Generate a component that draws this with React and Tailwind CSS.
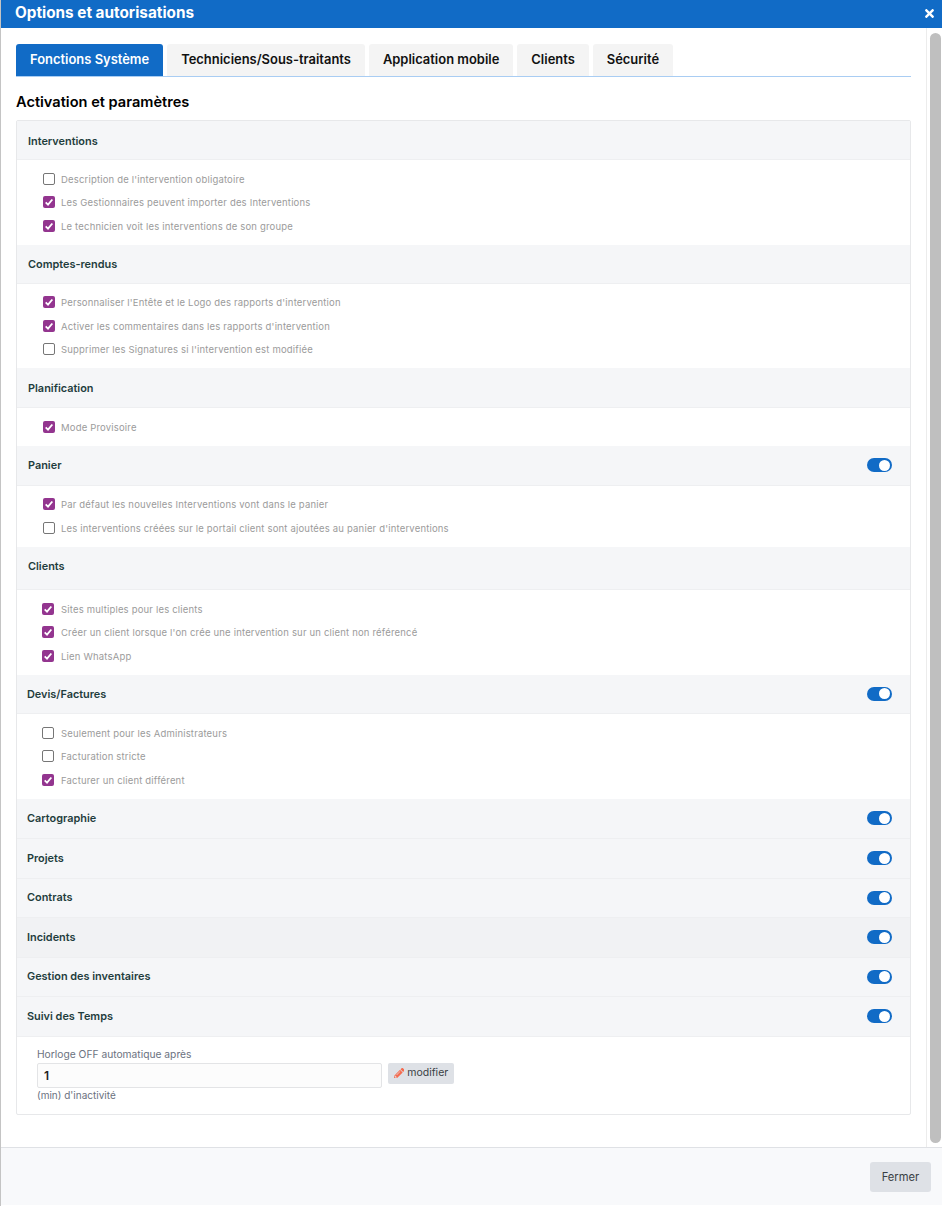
import React from 'react'
import { FaPencilAlt, FaTimes } from 'react-icons/fa'

const tabs = ['Fonctions Système', 'Techniciens/Sous-traitants', 'Application mobile', 'Clients', 'Sécurité']

const sections = [
    {
        title: 'Interventions',
        height: 'h-[39px]',
        label: 'pt-[2px]',
        items: [
            ["Description de l'intervention obligatoire", false],
            ['Les Gestionnaires peuvent importer des Interventions', true],
            ['Le technicien voit les interventions de son groupe', true],
        ],
    },
    {
        title: 'Comptes-rendus',
        height: 'h-[39px]',
        label: 'pt-[2px]',
        items: [
            ["Personnaliser l'Entête et le Logo des rapports d'intervention", true],
            ["Activer les commentaires dans les rapports d'intervention", true],
            ["Supprimer les Signatures si l'intervention est modifiée", false],
        ],
    },
    {
        title: 'Planification',
        height: 'h-[40px]',
        label: 'pt-[2px]',
        items: [['Mode Provisoire', true]],
    },
    {
        title: 'Panier',
        height: 'h-[40px]',
        toggle: true,
        items: [
            ['Par défaut les nouvelles Interventions vont dans le panier', true],
            ["Les interventions créées sur le portail client sont ajoutées au panier d'interventions", false],
        ],
    },
    {
        title: 'Clients',
        height: 'h-[43.5px]',
        label: 'pb-[3px]',
        itemsLeft: true,
        items: [
            ['Sites multiples pour les clients', true],
            ["Créer un client lorsque l'on crée une intervention sur un client non référencé", true],
            ['Lien WhatsApp', true],
        ],
    },
    {
        title: 'Devis/Factures',
        height: 'h-[39.5px]',
        toggle: true,
        shifted: true,
        itemsLeft: true,
        items: [
            ['Seulement pour les Administrateurs', false],
            ['Facturation stricte', false],
            ['Facturer un client différent', true],
        ],
    },
    { title: 'Cartographie', height: 'h-[40px]', toggle: true, shifted: true },
    { title: 'Projets', height: 'h-[40px]', toggle: true, shifted: true },
    { title: 'Contrats', height: 'h-[39px]', toggle: true, shifted: true },
    { title: 'Incidents', height: 'h-[40px]', toggle: true, dark: true, shifted: true },
    { title: 'Gestion des inventaires', height: 'h-[39px]', toggle: true, shifted: true },
    { title: 'Suivi des Temps', height: 'h-[40px]', toggle: true, shifted: true },
]

function Toggle() {
    return (
        <span className="flex h-[14px] w-[25px] items-center justify-end rounded-full bg-[#116bc6] pr-[2px]">
            <span className="h-[11px] w-[11px] rounded-full bg-white" />
        </span>
    )
}

function CheckItem({ label, checked, left }) {
    return (
        <div className={`flex h-[23.5px] items-center ${left ? 'pl-[25px]' : 'pl-[26px]'}`}>
            {checked ? (
                <span className="flex h-[12px] w-[12px] items-center justify-center rounded-[2px] bg-[#93358f]">
                    <svg viewBox="0 0 12 12" className="h-[10px] w-[10px]" fill="none" stroke="white" strokeWidth="2.2">
                        <path d="M2 6.5l2.8 2.6L10 3" />
                    </svg>
                </span>
            ) : (
                <span className="h-[12px] w-[12px] rounded-[2px] border border-[#767676] bg-white" />
            )}
            <span className={`pt-[2px] text-[9.5px] tracking-[0.019em] text-[#9b9b9b] ${left ? 'ml-[7px]' : 'ml-[6px]'}`}>
                {label}
            </span>
        </div>
    )
}

function Section({ title, height, toggle, dark, shifted, label, itemsLeft, items }) {
    return (
        <div>
            <div
                className={`flex ${height} items-center justify-between border-b border-[#eeeff1] pr-[18px] ${shifted ? 'pl-[10px]' : 'pl-[11px]'} ${dark ? 'bg-[#f1f2f4]' : 'bg-[#f5f6f8]'}`}
            >
                <span className={`text-[10.9px] font-semibold text-[#1f3d3d] ${label || ''}`}>{title}</span>
                {toggle && <Toggle />}
            </div>
            {items && (
                <div className="py-[7px]">
                    {items.map(([text, checked]) => (
                        <CheckItem key={text} label={text} checked={checked} left={itemsLeft} />
                    ))}
                </div>
            )}
        </div>
    )
}

export default function App() {
    return (
        <div className="flex h-[1206px] w-[942px] flex-col overflow-hidden border-l border-[#c4c4c4] bg-white font-['Inter',sans-serif]">
            <div className="flex h-[28px] shrink-0 items-center justify-between bg-[#116bc6] pb-[2px] pl-[14px] pr-[6px] text-white">
                <h1 className="text-[15.3px] font-bold">Options et autorisations</h1>
                <FaTimes className="text-[13px]" />
            </div>

            <div className="flex h-[1119px] shrink-0">
                <div className="min-w-0 flex-1 pl-[15px] pr-[15px] pt-[16px]">
                    <div className="flex h-[33px] gap-[4px] border-b border-[#a9cdf3]">
                        {tabs.map((tab, i) => (
                            <div
                                key={tab}
                                className={`flex items-center rounded-t-[3px] px-[14px] text-[12.95px] font-semibold ${
                                    i === 0 ? 'bg-[#116bc6] text-white' : 'bg-[#f4f4f4] text-[#111]'
                                }`}
                            >
                                {tab}
                            </div>
                        ))}
                    </div>
                    <h2 className="mt-[15px] h-[28px] text-[14.6px] font-semibold leading-[20px] text-black">
                        Activation et paramètres
                    </h2>
                    <div className="rounded-[2px] border border-[#e7e8ea]">
                        {sections.map((section) => (
                            <Section key={section.title} {...section} />
                        ))}
                        <div className="h-[77px] pl-[20px] pt-[11px] text-[10px] text-[#6b7280]">
                            <div className="text-[10.25px] leading-[13px]">Horloge OFF automatique après</div>
                            <div className="mt-[2px] flex items-start gap-[6px]">
                                <input
                                    readOnly
                                    value="1"
                                    className="h-[25px] w-[345px] rounded-[2px] border border-[#e3e4e6] bg-[#fcfcfc] px-[6px] text-[12px] font-semibold text-[#222]"
                                />
                                <button className="flex h-[21px] w-[66px] items-center justify-center gap-[3px] rounded-[2px] bg-[#dee1e6] text-[10.5px] text-[#3a3f45]">
                                    <FaPencilAlt className="text-[10.5px] text-[#f56b4f]" />
                                    modifier
                                </button>
                            </div>
                            <div className="leading-[14px]">(min) d'inactivité</div>
                        </div>
                    </div>
                </div>
                <div className="w-[16px] shrink-0 border-l border-[#ececec] pl-[3px] pr-[1px] pt-[5px] pb-[4px]">
                    <div className="h-full rounded-full bg-[#bfbfbf]" />
                </div>
            </div>

            <div className="flex h-[58px] shrink-0 items-start justify-end border-t border-[#dfe1e5] bg-[#f8f9fb] pr-[11px] pt-[14px]">
                <button className="h-[30px] w-[61px] rounded-[3px] bg-[#dee1e6] text-[11.2px] text-[#3a3f45]">Fermer</button>
            </div>
        </div>
    )
}
